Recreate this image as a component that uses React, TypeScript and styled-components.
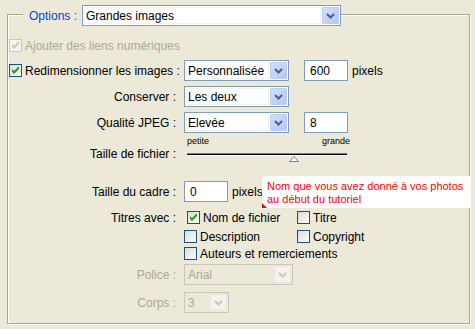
import React from 'react';
import styled, { createGlobalStyle } from 'styled-components';

const GlobalStyle = createGlobalStyle`
  html, body {
    margin: 0;
    padding: 0;
    background: #ece9d8;
  }
  body {
    font-family: "Liberation Sans", Arial, sans-serif;
    font-size: 12px;
    line-height: 14px;
    color: #000;
  }
`;

function CheckMark({ disabled }: { disabled?: boolean }) {
  return (
    <svg width="7" height="7" viewBox="0 0 7 7">
      <polygon
        points="0,2 2,4 7,-1 7,2 2,7 0,5"
        fill={disabled ? '#cac8bb' : '#21a121'}
      />
    </svg>
  );
}

function Chevron({ disabled }: { disabled?: boolean }) {
  return (
    <svg width="9" height="6" viewBox="0 0 9 6">
      <polyline
        points="1,1 4.5,4.5 8,1"
        fill="none"
        stroke={disabled ? '#c9c7ba' : '#4d6185'}
        strokeWidth="2"
      />
    </svg>
  );
}

function Select({
  value,
  width,
  disabled,
}: {
  value: string;
  width: number;
  disabled?: boolean;
}) {
  return (
    <SelectBox $w={width} $disabled={disabled}>
      <SelectText $disabled={disabled}>{value}</SelectText>
      <ArrowButton $disabled={disabled}>
        <Chevron disabled={disabled} />
      </ArrowButton>
    </SelectBox>
  );
}

function CheckItem({
  label,
  checked,
  disabled,
  width,
}: {
  label: string;
  checked?: boolean;
  disabled?: boolean;
  width?: number;
}) {
  return (
    <CheckWrap $w={width} $disabled={disabled}>
      <CheckBox $disabled={disabled}>
        {checked && <CheckMark disabled={disabled} />}
      </CheckBox>
      <span>{label}</span>
    </CheckWrap>
  );
}

function FileSizeSlider({ value }: { value: number }) {
  // value between 0 (petite) and 1 (grande)
  return (
    <SliderBox>
      <ScaleLabels>
        <span>petite</span>
        <span>grande</span>
      </ScaleLabels>
      <Track />
      <ThumbLane>
        <Thumb style={{ marginLeft: Math.round(value * 160) - 5 }}>
          <svg width="10" height="6" viewBox="0 0 10 6">
            <polygon points="5,0.5 9.5,5.5 0.5,5.5" fill="#fff" stroke="#808080" />
          </svg>
        </Thumb>
      </ThumbLane>
    </SliderBox>
  );
}

export default function App() {
  return (
    <>
      <GlobalStyle />
      <Page>
        <Panel>
          <Legend>
            <LegendText>Options :</LegendText>
            <Select value="Grandes images" width={259} />
          </Legend>

          <Row $top={24} $h={13}>
            <CheckItem label="Ajouter des liens numériques" checked disabled />
          </Row>

          <Row $top={8} $h={21}>
            <LeadCheck>
              <CheckItem label="Redimensionner les images :" checked />
            </LeadCheck>
            <Select value="Personnalisée" width={105} />
            <NumberInput $gap={15}>600</NumberInput>
            <Unit>pixels</Unit>
          </Row>

          <Row $top={5} $h={21}>
            <Label>Conserver :</Label>
            <Select value="Les deux" width={105} />
          </Row>

          <Row $top={5} $h={21}>
            <Label>Qualité JPEG :</Label>
            <Select value="Elevée" width={105} />
            <NumberInput $gap={15}>8</NumberInput>
          </Row>

          <SliderRow $top={3} $h={27}>
            <Label $offset={11}>Taille de fichier :</Label>
            <FileSizeSlider value={0.67} />
          </SliderRow>

          <Row $top={18} $h={21}>
            <Label>Taille du cadre :</Label>
            <NumberInput>0</NumberInput>
            <Unit>pixels</Unit>
          </Row>

          <Row $top={9} $h={13}>
            <Label>Titres avec :</Label>
            <Indent $w={3} />
            <CheckItem label="Nom de fichier" checked width={110} />
            <CheckItem label="Titre" />
          </Row>

          <Row $top={6} $h={13}>
            <Label />
            <CheckItem label="Description" width={113} />
            <CheckItem label="Copyright" />
          </Row>

          <Row $top={4} $h={13}>
            <Label />
            <CheckItem label="Auteurs et remerciements" />
          </Row>

          <Row $top={4} $h={21}>
            <Label $disabled>Police :</Label>
            <Select value="Arial" width={109} disabled />
          </Row>

          <Row $top={7} $h={21}>
            <Label $disabled>Corps :</Label>
            <Select value="3" width={45} disabled />
          </Row>

          <Note>
            Nom que vous avez donné à vos photos
            <br />
            au début du tutoriel
          </Note>
        </Panel>
      </Page>
    </>
  );
}

const Page = styled.div`
  width: 475px;
  height: 329px;
  box-sizing: border-box;
  padding: 14px 0 0 7px;
  background: #ece9d8;
  overflow: hidden;
`;

const Panel = styled.div`
  position: relative;
  box-sizing: border-box;
  width: 463px;
  height: 310px;
  border: 1px solid #aca899;
  box-shadow: inset 1px 1px 0 #fff, 1px 1px 0 #fff;
  padding-left: 1px;
  display: flex;
  flex-direction: column;
`;

// group box title sits over the top border
const Legend = styled.div`
  position: absolute;
  top: -10px;
  left: 15px;
  display: flex;
  align-items: center;
  padding-left: 6px;
  background: #ece9d8;
`;

const LegendText = styled.span`
  width: 53px;
  color: #0046d5;
  white-space: nowrap;
`;

const Row = styled.div<{ $top: number; $h: number }>`
  display: flex;
  align-items: center;
  flex: none;
  margin-top: ${({ $top }) => $top}px;
  height: ${({ $h }) => $h}px;
`;

const SliderRow = styled(Row)`
  align-items: flex-start;
`;

const Label = styled.div<{ $disabled?: boolean; $offset?: number }>`
  width: 167px;
  flex: none;
  margin-right: 8px;
  text-align: right;
  white-space: nowrap;
  color: ${({ $disabled }) => ($disabled ? '#aca899' : '#000')};
  ${({ $offset }) => ($offset ? `margin-top: ${$offset}px;` : '')}
`;

const LeadCheck = styled.div`
  width: 175px;
  flex: none;
`;

const Indent = styled.div<{ $w: number }>`
  width: ${({ $w }) => $w}px;
  flex: none;
`;

const SelectBox = styled.div<{ $w: number; $disabled?: boolean }>`
  box-sizing: border-box;
  width: ${({ $w }) => $w}px;
  height: 21px;
  flex: none;
  display: flex;
  align-items: stretch;
  padding: 1px;
  border: 1px solid ${({ $disabled }) => ($disabled ? '#c9c7ba' : '#7f9db9')};
  background: ${({ $disabled }) => ($disabled ? '#ece9d8' : '#fff')};
`;

const SelectText = styled.div<{ $disabled?: boolean }>`
  flex: 1;
  display: flex;
  align-items: center;
  padding-left: 2px;
  margin-right: 1px;
  white-space: nowrap;
  overflow: hidden;
  color: ${({ $disabled }) => ($disabled ? '#aca899' : '#000')};
  box-shadow: ${({ $disabled }) => ($disabled ? 'none' : 'inset 0 0 0 1px #f4f3ec')};
`;

const ArrowButton = styled.div<{ $disabled?: boolean }>`
  box-sizing: border-box;
  width: 17px;
  flex: none;
  display: flex;
  align-items: center;
  justify-content: center;
  border: 1px solid ${({ $disabled }) => ($disabled ? '#e8e6dc' : '#bccdf5')};
  border-radius: 1px;
  background: ${({ $disabled }) =>
    $disabled ? '#f3f2ec' : 'linear-gradient(135deg, #d2defc 0%, #b3c8f6 100%)'};
`;

const NumberInput = styled.div<{ $gap?: number }>`
  box-sizing: border-box;
  width: 44px;
  height: 21px;
  flex: none;
  margin-left: ${({ $gap }) => $gap ?? 0}px;
  padding-left: 5px;
  display: flex;
  align-items: center;
  border: 1px solid #7f9db9;
  background: #fff;
`;

const Unit = styled.span`
  margin-left: 4px;
`;

const CheckWrap = styled.div<{ $w?: number; $disabled?: boolean }>`
  display: flex;
  align-items: center;
  gap: 3px;
  flex: none;
  white-space: nowrap;
  ${({ $w }) => ($w ? `width: ${$w}px;` : '')}
  color: ${({ $disabled }) => ($disabled ? '#aca899' : '#000')};
`;

const CheckBox = styled.span<{ $disabled?: boolean }>`
  box-sizing: border-box;
  width: 13px;
  height: 13px;
  flex: none;
  display: flex;
  align-items: center;
  justify-content: center;
  border: 1px solid ${({ $disabled }) => ($disabled ? '#cac8bb' : '#1c5180')};
  background: ${({ $disabled }) =>
    $disabled ? '#f4f3ee' : 'linear-gradient(135deg, #dcdcd7 0%, #fbfbf9 100%)'};
`;

const SliderBox = styled.div`
  width: 166px;
  display: flex;
  flex-direction: column;
`;

const ScaleLabels = styled.div`
  display: flex;
  justify-content: space-between;
  padding-left: 3px;
  height: 10px;
  font-size: 9px;
  line-height: 10px;
`;

const Track = styled.div`
  margin: 7px 3px 0 3px;
  height: 1px;
  border-top: 1px solid #808080;
  background: #000;
  border-bottom: 1px solid #fff;
`;

const ThumbLane = styled.div`
  display: flex;
  padding-left: 3px;
`;

const Thumb = styled.div`
  width: 10px;
  height: 6px;
  line-height: 0;
`;

// annotation pasted on top of the dialog
const Note = styled.div`
  position: absolute;
  left: 254px;
  top: 161px;
  box-sizing: border-box;
  width: 208px;
  height: 32px;
  padding: 4px 0 0 5px;
  background: #fff;
  color: #f00;
  font-size: 11px;
  line-height: 13px;
  white-space: nowrap;

  &::after {
    content: '';
    position: absolute;
    left: 0;
    bottom: 0;
    border-left: 5px solid #f00;
    border-top: 5px solid transparent;
  }
`;
